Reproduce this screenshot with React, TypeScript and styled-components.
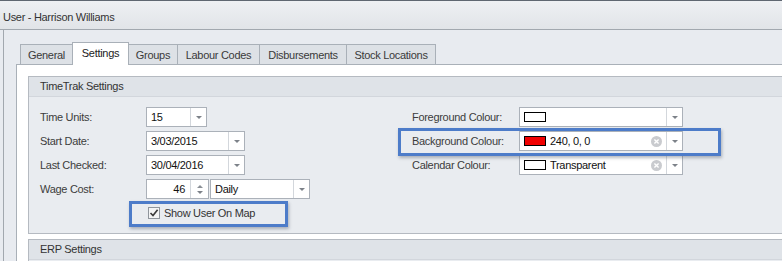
import React from "react";
import styled, { createGlobalStyle } from "styled-components";

const GlobalStyle = createGlobalStyle`
  html, body {
    margin: 0;
    padding: 0;
    width: 782px;
    height: 261px;
    overflow: hidden;
    background: #e8ebf0;
  }
  body {
    font-family: "Liberation Sans", Arial, sans-serif;
    font-size: 11px;
    letter-spacing: -0.3px;
    color: #333;
  }
  * { box-sizing: border-box; }
`;

const Window = styled.div`
  width: 782px;
  height: 261px;
  display: flex;
  flex-direction: column;
  border-top: 1px solid #5f6771;
  overflow: hidden;
`;

const TitleBar = styled.div`
  height: 29px;
  flex: none;
  padding: 10px 0 0 3px;
  background: linear-gradient(#eef0f3, #e1e4e8);
  border-bottom: 1px solid #a2a8af;
  color: #333;
  line-height: 13px;
`;

const Body = styled.div`
  flex: 1;
  margin-left: 3px;
  border-left: 1px solid #a2a8af;
  padding: 12px 0 0 12px;
  display: flex;
  flex-direction: column;
`;

const TabStrip = styled.div`
  display: flex;
  align-items: flex-end;
  height: 22px;
  padding-left: 4px;
  position: relative;
  z-index: 2;
`;

const Tab = styled.div<{ $w: number; $active?: boolean }>`
  width: ${(p) => p.$w}px;
  height: ${(p) => (p.$active ? 23 : 20)}px;
  margin-bottom: ${(p) => (p.$active ? -1 : 0)}px;
  margin-left: -1px;
  &:first-child { margin-left: 0; }
  border: 1px solid #a9b0b8;
  border-bottom: none;
  background: ${(p) => (p.$active ? "#ffffff" : "#dde1e6")};
  color: ${(p) => (p.$active ? "#222" : "#3a3a3a")};
  display: flex;
  align-items: center;
  justify-content: center;
  padding-bottom: ${(p) => (p.$active ? 2 : 0)}px;
  position: relative;
  z-index: ${(p) => (p.$active ? 2 : 1)};
`;

const TabPage = styled.div`
  flex: 1;
  width: 800px;
  background: #ffffff;
  border-top: 1px solid #a9b0b8;
  border-left: 1px solid #a9b0b8;
  padding: 11px 0 0 11px;
  display: flex;
  flex-direction: column;
  gap: 5px;
`;

const GroupBox = styled.div`
  border: 1px solid #b5bac1;
  border-right: none;
  background: #e9ecf0;
  flex: none;
`;

const GroupHeader = styled.div`
  height: 20px;
  background: #dfe3e8;
  border-bottom: 1px solid #d2d6dc;
  padding-left: 11px;
  line-height: 19px;
  color: #333;
`;

const GroupContent = styled.div`
  position: relative;
  display: flex;
  padding: 10px 0 10px 0;
`;

const Column = styled.div<{ $w?: number; $pl?: number }>`
  width: ${(p) => (p.$w ? `${p.$w}px` : "auto")};
  padding-left: ${(p) => p.$pl ?? 0}px;
  display: flex;
  flex-direction: column;
  gap: 4px;
`;

const FieldRow = styled.div`
  display: flex;
  align-items: center;
  height: 20px;
`;

const Label = styled.div<{ $w: number }>`
  width: ${(p) => p.$w}px;
  color: #3c3c3c;
`;

const Combo = styled.div<{ $w: number }>`
  width: ${(p) => p.$w}px;
  height: 20px;
  border: 1px solid #abb1b9;
  background: #fff;
  display: flex;
  align-items: stretch;
`;

const ComboText = styled.div<{ $right?: boolean }>`
  flex: 1;
  display: flex;
  align-items: center;
  justify-content: ${(p) => (p.$right ? "flex-end" : "flex-start")};
  padding: ${(p) => (p.$right ? "0 5px 0 0" : "0 0 0 4px")};
  color: #111;
  gap: 4px;
`;

const DropButton = styled.div`
  width: 16px;
  border-left: 1px solid #d3d7dc;
  display: flex;
  align-items: center;
  justify-content: center;
`;

const Arrow = styled.div<{ $up?: boolean }>`
  width: 0;
  height: 0;
  border-left: 3px solid transparent;
  border-right: 3px solid transparent;
  ${(p) =>
    p.$up
      ? "border-bottom: 3px solid #8a8f96;"
      : "border-top: 3px solid #7d8289;"}
`;

const SpinButtons = styled.div`
  width: 18px;
  border-left: 1px solid #d3d7dc;
  display: flex;
  flex-direction: column;
  align-items: center;
  justify-content: center;
  gap: 3px;
`;

const Swatch = styled.div<{ $c: string }>`
  width: 22px;
  height: 10px;
  border: 1px solid #000;
  background: ${(p) => p.$c};
  flex: none;
`;

const ClearIcon = styled.svg`
  width: 11px;
  height: 11px;
  margin-right: 4px;
  align-self: center;
`;

const CheckRow = styled.div`
  display: flex;
  align-items: center;
  height: 20px;
  padding-left: 108px;
  gap: 4px;
`;

const CheckBox = styled.div`
  width: 12px;
  height: 12px;
  border: 1px solid #8f959c;
  background: #f3f4f5;
  display: flex;
  align-items: center;
  justify-content: center;
`;

const Highlight = styled.div`
  position: absolute;
  border: 3px solid #4d7cc9;
  box-shadow: 1px 2px 3px rgba(90, 100, 115, 0.45);
  pointer-events: none;
`;

const Drop = () => (
  <DropButton>
    <Arrow />
  </DropButton>
);

const Clear = () => (
  <ClearIcon viewBox="0 0 11 11">
    <circle cx="5.5" cy="5.5" r="5.5" fill="#c9cbcf" />
    <path d="M3.4 3.4 L7.6 7.6 M7.6 3.4 L3.4 7.6" stroke="#fff" strokeWidth="1.4" />
  </ClearIcon>
);

const tabs = [
  { name: "General", w: 53 },
  { name: "Settings", w: 57, active: true },
  { name: "Groups", w: 50 },
  { name: "Labour Codes", w: 83 },
  { name: "Disbursements", w: 88 },
  { name: "Stock Locations", w: 90 },
];

export default function App() {
  return (
    <>
      <GlobalStyle />
      <Window>
        <TitleBar>User - Harrison Williams</TitleBar>
        <Body>
          <TabStrip>
            {tabs.map((t) => (
              <Tab key={t.name} $w={t.w} $active={t.active}>
                {t.name}
              </Tab>
            ))}
          </TabStrip>
          <TabPage>
            <GroupBox>
              <GroupHeader>TimeTrak Settings</GroupHeader>
              <GroupContent>
                <Column $w={383} $pl={11}>
                  <FieldRow>
                    <Label $w={106}>Time Units:</Label>
                    <Combo $w={61}>
                      <ComboText>15</ComboText>
                      <Drop />
                    </Combo>
                  </FieldRow>
                  <FieldRow>
                    <Label $w={106}>Start Date:</Label>
                    <Combo $w={99}>
                      <ComboText>3/03/2015</ComboText>
                      <Drop />
                    </Combo>
                  </FieldRow>
                  <FieldRow>
                    <Label $w={106}>Last Checked:</Label>
                    <Combo $w={99}>
                      <ComboText>30/04/2016</ComboText>
                      <Drop />
                    </Combo>
                  </FieldRow>
                  <FieldRow>
                    <Label $w={106}>Wage Cost:</Label>
                    <Combo $w={63}>
                      <ComboText $right>46</ComboText>
                      <SpinButtons>
                        <Arrow $up />
                        <Arrow />
                      </SpinButtons>
                    </Combo>
                    <Combo $w={100} style={{ marginLeft: 1 }}>
                      <ComboText>Daily</ComboText>
                      <Drop />
                    </Combo>
                  </FieldRow>
                  <CheckRow>
                    <CheckBox>
                      <svg width="10" height="10" viewBox="0 0 10 10">
                        <path d="M1.5 5 L4 7.6 L8.6 1.8" fill="none" stroke="#3a3a3a" strokeWidth="1.6" />
                      </svg>
                    </CheckBox>
                    <span>Show User On Map</span>
                  </CheckRow>
                </Column>
                <Column>
                  <FieldRow>
                    <Label $w={107}>Foreground Colour:</Label>
                    <Combo $w={164}>
                      <ComboText>
                        <Swatch $c="#ffffff" />
                      </ComboText>
                      <Drop />
                    </Combo>
                  </FieldRow>
                  <FieldRow>
                    <Label $w={107}>Background Colour:</Label>
                    <Combo $w={164}>
                      <ComboText>
                        <Swatch $c="#f00000" />
                        240, 0, 0
                      </ComboText>
                      <Clear />
                      <Drop />
                    </Combo>
                  </FieldRow>
                  <FieldRow>
                    <Label $w={107}>Calendar Colour:</Label>
                    <Combo $w={164}>
                      <ComboText>
                        <Swatch $c="transparent" />
                        Transparent
                      </ComboText>
                      <Clear />
                      <Drop />
                    </Combo>
                  </FieldRow>
                </Column>
                <Highlight style={{ left: 100, top: 104, width: 159, height: 26 }} />
                <Highlight style={{ left: 369, top: 31, width: 323, height: 28 }} />
              </GroupContent>
            </GroupBox>
            <GroupBox>
              <GroupHeader>ERP Settings</GroupHeader>
              <GroupContent />
            </GroupBox>
          </TabPage>
        </Body>
      </Window>
    </>
  );
}
